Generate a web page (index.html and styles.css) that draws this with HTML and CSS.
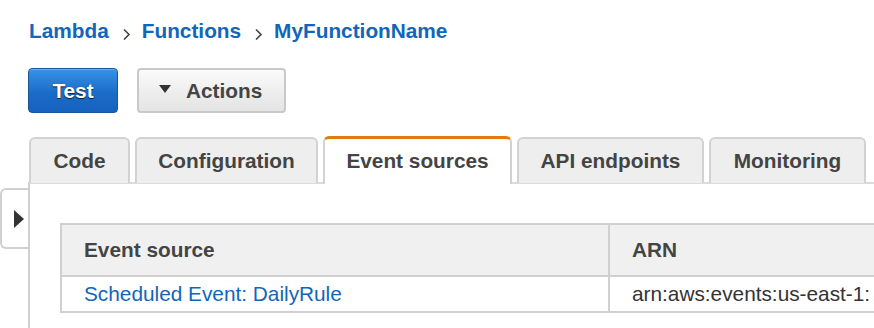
FILE: index.html
```html
<!DOCTYPE html>
<html lang="en">
<head>
<meta charset="utf-8">
<title>MyFunctionName - Lambda</title>
<link rel="stylesheet" href="styles.css">
</head>
<body>
<div class="page">
  <nav class="crumbs">
    <a class="crumb" href="#">Lambda</a>
    <svg class="chev" width="9" height="12" viewBox="0 0 9 12"><path d="M2 1.5 L7 6.5 L2 11.5" fill="none" stroke="#444" stroke-width="1.6"/></svg>
    <a class="crumb" href="#">Functions</a>
    <svg class="chev" width="9" height="12" viewBox="0 0 9 12"><path d="M2 1.5 L7 6.5 L2 11.5" fill="none" stroke="#444" stroke-width="1.6"/></svg>
    <a class="crumb" href="#">MyFunctionName</a>
  </nav>

  <div class="toolbar">
    <button class="btn btn-primary">Test</button>
    <button class="btn btn-default"><span class="caret"></span>Actions</button>
  </div>

  <div class="workspace">
    <button class="side-toggle" aria-label="Expand">
      <svg width="10" height="18" viewBox="0 0 10 18"><path d="M0 0 L10 9 L0 18 Z" fill="#333"/></svg>
    </button>
    <div class="main">
      <ul class="tabs">
        <li class="tab tab-code">Code</li>
        <li class="tab tab-config">Configuration</li>
        <li class="tab tab-events active">Event sources</li>
        <li class="tab tab-api">API endpoints</li>
        <li class="tab tab-monitor">Monitoring</li>
      </ul>
      <div class="panel">
        <table class="grid">
          <thead>
            <tr><th class="col-source">Event source</th><th class="col-arn">ARN</th></tr>
          </thead>
          <tbody>
            <tr><td class="col-source"><a href="#">Scheduled Event: DailyRule</a></td><td class="col-arn">arn:aws:events:us-east-1:</td></tr>
          </tbody>
        </table>
      </div>
    </div>
  </div>
</div>
</body>
</html>
```

FILE: styles.css
```css
html, body {
  margin: 0;
  padding: 0;
  overflow: hidden;
  background: #fff;
}

body {
  font-family: "Liberation Sans", Arial, Helvetica, sans-serif;
  font-size: 20.8px;
  color: #444;
}

.page {
  width: 874px;
  height: 328px;
  overflow: hidden;
}

/* breadcrumb */
.crumbs {
  display: flex;
  align-items: center;
  height: 24px;
  line-height: 24px;
  margin: 19px 0 0 29px;
}

.crumb {
  color: #1166bb;
  font-weight: bold;
  text-decoration: none;
}

.chev {
  margin: 6px 11px 0 13px;
}

/* toolbar */
.toolbar {
  display: flex;
  gap: 19px;
  margin: 25px 0 0 28px;
}

.btn {
  height: 45px;
  border-radius: 4px;
  font-family: inherit;
  font-size: 20.8px;
  font-weight: bold;
  padding: 0;
  display: flex;
  align-items: center;
  justify-content: center;
  box-sizing: border-box;
}

.btn-primary {
  width: 90px;
  color: #fff;
  background: linear-gradient(#3792e8, #1b6cc8 55%, #1563bd);
  border: 1.5px solid #17559c;
  text-shadow: 0 1px 1px rgba(0, 0, 0, 0.7), 0 0 1px rgba(0, 0, 0, 0.4);
  box-shadow: inset 0 1px 0 rgba(255, 255, 255, 0.25);
}

.btn-default {
  width: 149px;
  color: #444;
  background: linear-gradient(#fbfbfb, #ececec 60%, #e4e4e4);
  border: 2px solid #c9c9c9;
  justify-content: flex-start;
  padding-left: 20px;
}

.caret {
  width: 0;
  height: 0;
  border-left: 6.5px solid transparent;
  border-right: 6.5px solid transparent;
  border-top: 8px solid #333;
  margin: 0 15px 4px 0;
}

/* workspace */
.workspace {
  display: flex;
  margin-top: 24px;
}

.side-toggle {
  flex: none;
  width: 28px;
  height: 61px;
  margin-top: 51px;
  padding: 0 0 0 12px;
  box-sizing: border-box;
  background: #fff;
  border: 2px solid #d0d0d0;
  border-right: none;
  border-radius: 6px 0 0 6px;
  display: flex;
  align-items: center;
}

.main {
  flex: 1;
  min-width: 0;
}

/* tabs */
.tabs {
  list-style: none;
  margin: 0 0 0 1px;
  padding: 0;
  display: flex;
  gap: 5px;
  position: relative;
  z-index: 1;
}

.tab {
  flex: none;
  height: 46px;
  box-sizing: border-box;
  padding: 0;
  display: flex;
  align-items: center;
  justify-content: center;
  white-space: nowrap;
  font-weight: bold;
  color: #444;
  background: #eee;
  border: 2px solid #d2d2d2;
  border-bottom: none;
  border-radius: 6px 6px 0 0;
  margin-bottom: -1px;
}

.tab-code { width: 101px; }
.tab-config { width: 183px; }
.tab-events { width: 189px; }
.tab-api { width: 187px; }
.tab-monitor { width: 157px; }

.tab.active {
  background: #fff;
  border-top: 3px solid #e27b0f;
  height: 48px;
  margin-top: -1px;
  margin-bottom: -2px;
  padding-bottom: 1px;
}

/* panel */
.panel {
  border-top: 2px solid #dcdcdc;
  border-left: 2px solid #d0d0d0;
  padding: 39px 0 0 30px;
  height: 160px;
  overflow: hidden;
}

.grid {
  border-collapse: collapse;
  width: 1100px;
  font-size: 20.8px;
}

.grid th,
.grid td {
  text-align: left;
  padding: 0 0 0 22px;
  border: 2px solid #d0d0d0;
  white-space: nowrap;
}

.grid th {
  height: 50px;
  background: #f0f0f0;
  color: #444;
  font-weight: bold;
}

.grid td {
  height: 34px;
  color: #333;
}

.grid .col-source {
  width: 524px;
}

.grid a {
  color: #1166bb;
  text-decoration: none;
}
```
